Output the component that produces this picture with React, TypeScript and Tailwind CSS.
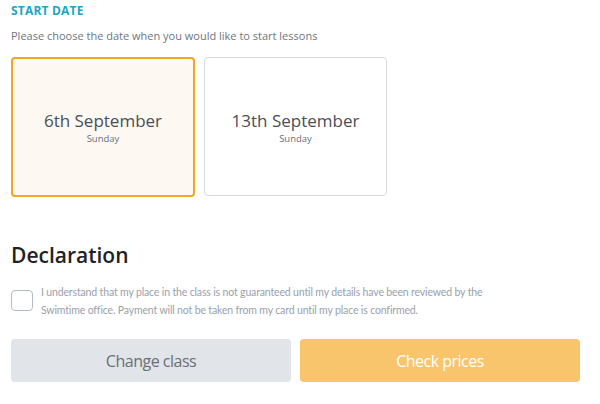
import { useState } from 'react';

type DateOption = {
  id: string;
  label: string;
  day: string;
};

const dates: DateOption[] = [
  { id: '2020-09-06', label: '6th September', day: 'Sunday' },
  { id: '2020-09-13', label: '13th September', day: 'Sunday' },
];

function DateCard({
  option,
  selected,
  onSelect,
}: {
  option: DateOption;
  selected: boolean;
  onSelect: () => void;
}) {
  return (
    <button
      type="button"
      onClick={onSelect}
      className={
        selected
          ? 'flex h-[140px] w-[184px] flex-col items-center justify-center rounded-[4px] border-2 border-[#f5a623] bg-[#fdf8f2]'
          : 'flex h-[139px] w-[183px] flex-col items-center justify-center rounded-[4px] border border-[#d6d9de] bg-white'
      }
    >
      <span className="text-[17px] leading-6 text-[#4a4f57]">{option.label}</span>
      <span className="text-[9.5px] leading-3 text-[#6b7079]">{option.day}</span>
    </button>
  );
}

export default function App() {
  const [selected, setSelected] = useState(dates[0].id);
  const [agreed, setAgreed] = useState(false);

  return (
    <div
      className="h-[404px] w-[600px] bg-white px-[11px]"
      style={{ fontFamily: '"Open Sans", "Noto Sans", sans-serif' }}
    >
      <h3 className="pt-[3px] text-[12px] leading-4 font-bold tracking-[0.2px] text-[#1aa5c8] uppercase">
        Start date
      </h3>
      <p className="mt-[9px] text-[11px] leading-4 text-[#70757d]">
        Please choose the date when you would like to start lessons
      </p>

      <div className="mt-[13px] flex gap-[9px]">
        {dates.map((d) => (
          <DateCard
            key={d.id}
            option={d}
            selected={selected === d.id}
            onSelect={() => setSelected(d.id)}
          />
        ))}
      </div>

      <h2 className="mt-[44px] text-[21px] leading-7 font-semibold text-[#1f2226]">
        Declaration
      </h2>

      <label className="mt-[14px] flex cursor-pointer items-start gap-[8px]">
        <input
          type="checkbox"
          checked={agreed}
          onChange={(e) => setAgreed(e.target.checked)}
          className="sr-only"
        />
        <span className="mt-[7px] h-[21px] w-[22px] shrink-0 rounded-[4px] border border-[#b5bcc6] bg-white" />
        <span
          className="w-[470px] text-[10.5px] leading-[18px] tracking-[-0.15px] text-[#9aa1ab]"
          style={{ fontFamily: 'Lato, "Open Sans", sans-serif' }}
        >
          I understand that my place in the class is not guaranteed until my details have been
          reviewed by the Swimtime office. Payment will not be taken from my card until my place is
          confirmed.
        </span>
      </label>

      <div className="mt-[20px] flex gap-[9px]">
        <button
          type="button"
          className="h-[43px] w-[280px] rounded-[4px] bg-[#e1e4e9] text-[16px] tracking-[-0.5px] text-[#6a6f77]"
        >
          Change class
        </button>
        <button
          type="button"
          className="h-[43px] w-[280px] rounded-[4px] bg-[#f8c56c] text-[16px] tracking-[-0.5px] text-white"
        >
          Check prices
        </button>
      </div>
    </div>
  );
}
